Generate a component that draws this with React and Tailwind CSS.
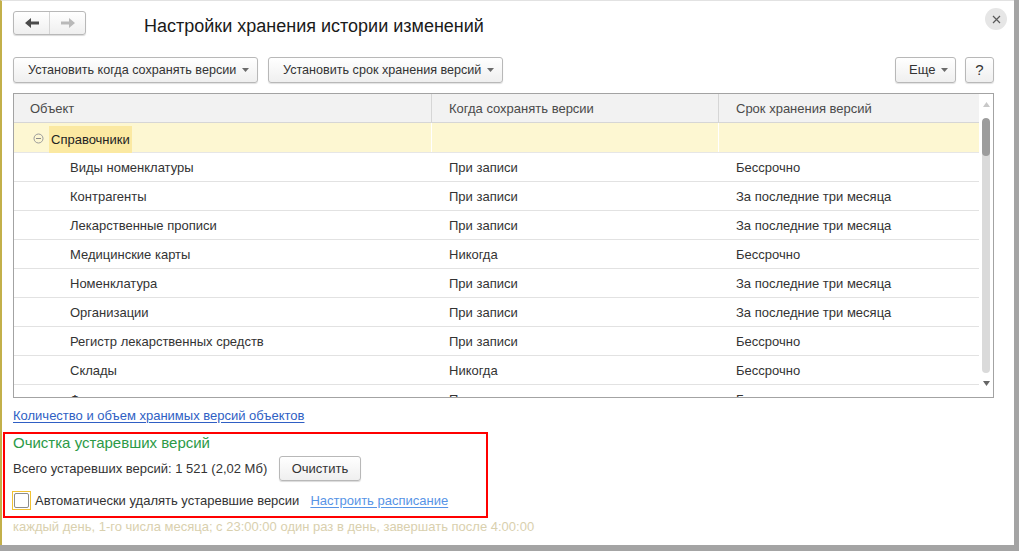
import React from "react";

const rows = [
  ["Виды номенклатуры", "При записи", "Бессрочно"],
  ["Контрагенты", "При записи", "За последние три месяца"],
  ["Лекарственные прописи", "При записи", "За последние три месяца"],
  ["Медицинские карты", "Никогда", "Бессрочно"],
  ["Номенклатура", "При записи", "За последние три месяца"],
  ["Организации", "При записи", "За последние три месяца"],
  ["Регистр лекарственных средств", "При записи", "Бессрочно"],
  ["Склады", "Никогда", "Бессрочно"],
  ["Физические лица", "При записи", "Бессрочно"],
];

function DropArrow() {
  return (
    <svg width="7" height="4" viewBox="0 0 7 4" className="ml-auto shrink-0">
      <path d="M0 0 L7 0 L3.5 4 Z" fill="#6b6b6b" />
    </svg>
  );
}

function ToolButton({ children, className = "" }) {
  return (
    <div
      className={
        "flex items-center whitespace-nowrap h-[26px] rounded-[3px] border border-[#b8b8b8] bg-gradient-to-b from-white to-[#efefef] shadow-[0_1px_1px_rgba(0,0,0,0.12)] text-[#333] " +
        className
      }
    >
      {children}
    </div>
  );
}

function App() {
  return (
    <div className="w-[1019px] h-[551px] bg-[#a4a4a4] overflow-hidden font-['Liberation_Sans',Arial,sans-serif]">
      <div className="w-[1014px] h-[545px] bg-white border-l-2 border-[#c3b04a] border-t border-t-[#e2e2e2] flex flex-col">
        {/* header */}
        <div className="flex items-start h-[56px]">
          <div className="ml-[11px] mt-[10px] flex h-[24px] w-[73px] rounded-[3px] border border-[#b8b8b8] bg-gradient-to-b from-white to-[#efefef] shadow-[0_1px_1px_rgba(0,0,0,0.15)]">
            <div className="w-[36px] flex items-center justify-center border-r border-[#d4d4d4]">
              <svg width="14" height="10" viewBox="0 0 14 10">
                <path d="M0 5 L6 0 L6 3.5 L14 3.5 L14 6.5 L6 6.5 L6 10 Z" fill="#4a4a4a" />
              </svg>
            </div>
            <div className="flex-1 flex items-center justify-center">
              <svg width="14" height="10" viewBox="0 0 14 10">
                <path d="M14 5 L8 0 L8 3.5 L0 3.5 L0 6.5 L8 6.5 L8 10 Z" fill="#b9b9b9" />
              </svg>
            </div>
          </div>
          <div className="ml-[58px] mt-[14px] text-[18px] leading-[22px] text-[#1a1a1a] whitespace-nowrap">
            Настройки хранения истории изменений
          </div>
          <div className="ml-auto mr-[7px] mt-[7px] w-[22px] h-[22px] rounded-full bg-[#e6e6e6] flex items-center justify-center">
            <svg width="9" height="9" viewBox="0 0 9 9">
              <path d="M1 1 L8 8 M8 1 L1 8" stroke="#5a5a5a" strokeWidth="1.2" />
            </svg>
          </div>
        </div>

        {/* toolbar */}
        <div className="flex items-center h-[26px] ml-[11px]">
          <ToolButton className="w-[245px] pl-[14px] pr-[8px] text-[12.6px]">
            Установить когда сохранять версии
            <DropArrow />
          </ToolButton>
          <ToolButton className="ml-[10px] w-[235px] pl-[14px] pr-[8px] text-[12.6px]">
            Установить срок хранения версий
            <DropArrow />
          </ToolButton>
          <ToolButton className="ml-auto w-[61px] pl-[13px] pr-[7px] text-[13px]">
            Еще
            <DropArrow />
          </ToolButton>
          <ToolButton className="ml-[9px] mr-[20px] w-[29px] justify-center text-[15px] text-[#222]">
            ?
          </ToolButton>
        </div>

        {/* table */}
        <div className="ml-[11px] mt-[10px] w-[981px] h-[305px] border border-[#a3a3a3] flex overflow-hidden">
          <div className="w-[965px] text-[13px] text-[#333]">
            <div className="flex h-[29px] bg-[#f2f2f2] border-b border-[#d6d6d6] text-[#4a4a4a]">
              <div className="w-[418px] pl-[16px] pt-[2px] flex items-center border-r border-[#d6d6d6]">Объект</div>
              <div className="w-[287px] pl-[17px] pt-[2px] flex items-center border-r border-[#d6d6d6]">Когда сохранять версии</div>
              <div className="flex-1 pl-[17px] pt-[2px] flex items-center">Срок хранения версий</div>
            </div>
            <div className="flex h-[30px] bg-[#fdf7d2] border-b border-[#e6e6e6]">
              <div className="w-[418px] flex items-center border-r border-white">
                <svg width="11" height="11" viewBox="0 0 11 11" className="ml-[19px] mt-[2px]">
                  <circle cx="5.5" cy="5.5" r="4.5" fill="none" stroke="#9a9a9a" />
                  <path d="M3 5.5 L8 5.5" stroke="#8a8a8a" />
                </svg>
                <div className="ml-[5px] h-[27px] mt-[3px] px-[2px] pt-[1px] flex items-center bg-[#fbe9a2] text-[#222]">
                  Справочники
                </div>
              </div>
              <div className="w-[287px] border-r border-white"></div>
              <div className="flex-1"></div>
            </div>
            {rows.map((r, i) => (
              <div key={i} className="flex h-[29px] pt-[2px] items-center whitespace-nowrap border-b border-[#e2e2e2]">
                <div className="w-[418px] pl-[56px]">{r[0]}</div>
                <div className="w-[287px] pl-[17px]">{r[1]}</div>
                <div className="flex-1 pl-[17px]">{r[2]}</div>
              </div>
            ))}
          </div>
          <div className="w-[14px] flex flex-col items-center">
            <svg width="7" height="5" viewBox="0 0 7 5" className="mt-[8px]">
              <path d="M0 5 L7 5 L3.5 0 Z" fill="#c8c8c8" />
            </svg>
            <div className="mt-[11px] w-[8px] h-[255px] rounded-[4px] bg-[#dadada] overflow-hidden">
              <div className="h-[38px] rounded-[4px] bg-[#9c9c9c]"></div>
            </div>
            <svg width="7" height="5" viewBox="0 0 7 5" className="mt-[8px]">
              <path d="M0 0 L7 0 L3.5 5 Z" fill="#666" />
            </svg>
          </div>
        </div>

        {/* link */}
        <div className="ml-[11px] mt-[10px] text-[13px] leading-[15px] text-[#2f5fc4] underline underline-offset-2">
          Количество и объем хранимых версий объектов
        </div>

        {/* red box */}
        <div className="ml-[1px] mt-[9px] w-[485px] h-[86px] border-2 border-[#ff0000] pl-[8px] flex flex-col">
          <div className="text-[15px] leading-[17px] text-[#2c9a47]">Очистка устаревших версий</div>
          <div className="flex items-center mt-[5px] text-[13px] text-[#333]">
            <span>Всего устаревших версий: 1 521 (2,02 Мб)</span>
            <div className="ml-auto mr-[125px] w-[82px] h-[25px] flex items-center justify-center rounded-[3px] border border-[#b8b8b8] bg-gradient-to-b from-white to-[#efefef] shadow-[0_1px_1px_rgba(0,0,0,0.15)]">
              Очистить
            </div>
          </div>
          <div className="flex items-center mt-[9px] pt-[1px] text-[13px]">
            <div className="-ml-[1px] w-[19px] h-[19px] border border-[#f1c232] flex items-center justify-center">
              <div className="w-[15px] h-[15px] rounded-[2px] border border-[#8c8c8c] bg-white"></div>
            </div>
            <span className="ml-[4px] text-[#333]">Автоматически удалять устаревшие версии</span>
            <span className="ml-[11px] text-[#5794e6] underline underline-offset-2">Настроить расписание</span>
          </div>
        </div>

        <div className="ml-[11px] mt-[1px] text-[13px] leading-[15px] text-[#d9d0ae] whitespace-nowrap">
          каждый день, 1-го числа месяца; с 23:00:00 один раз в день, завершать после 4:00:00
        </div>
      </div>
    </div>
  );
}

export default App;
